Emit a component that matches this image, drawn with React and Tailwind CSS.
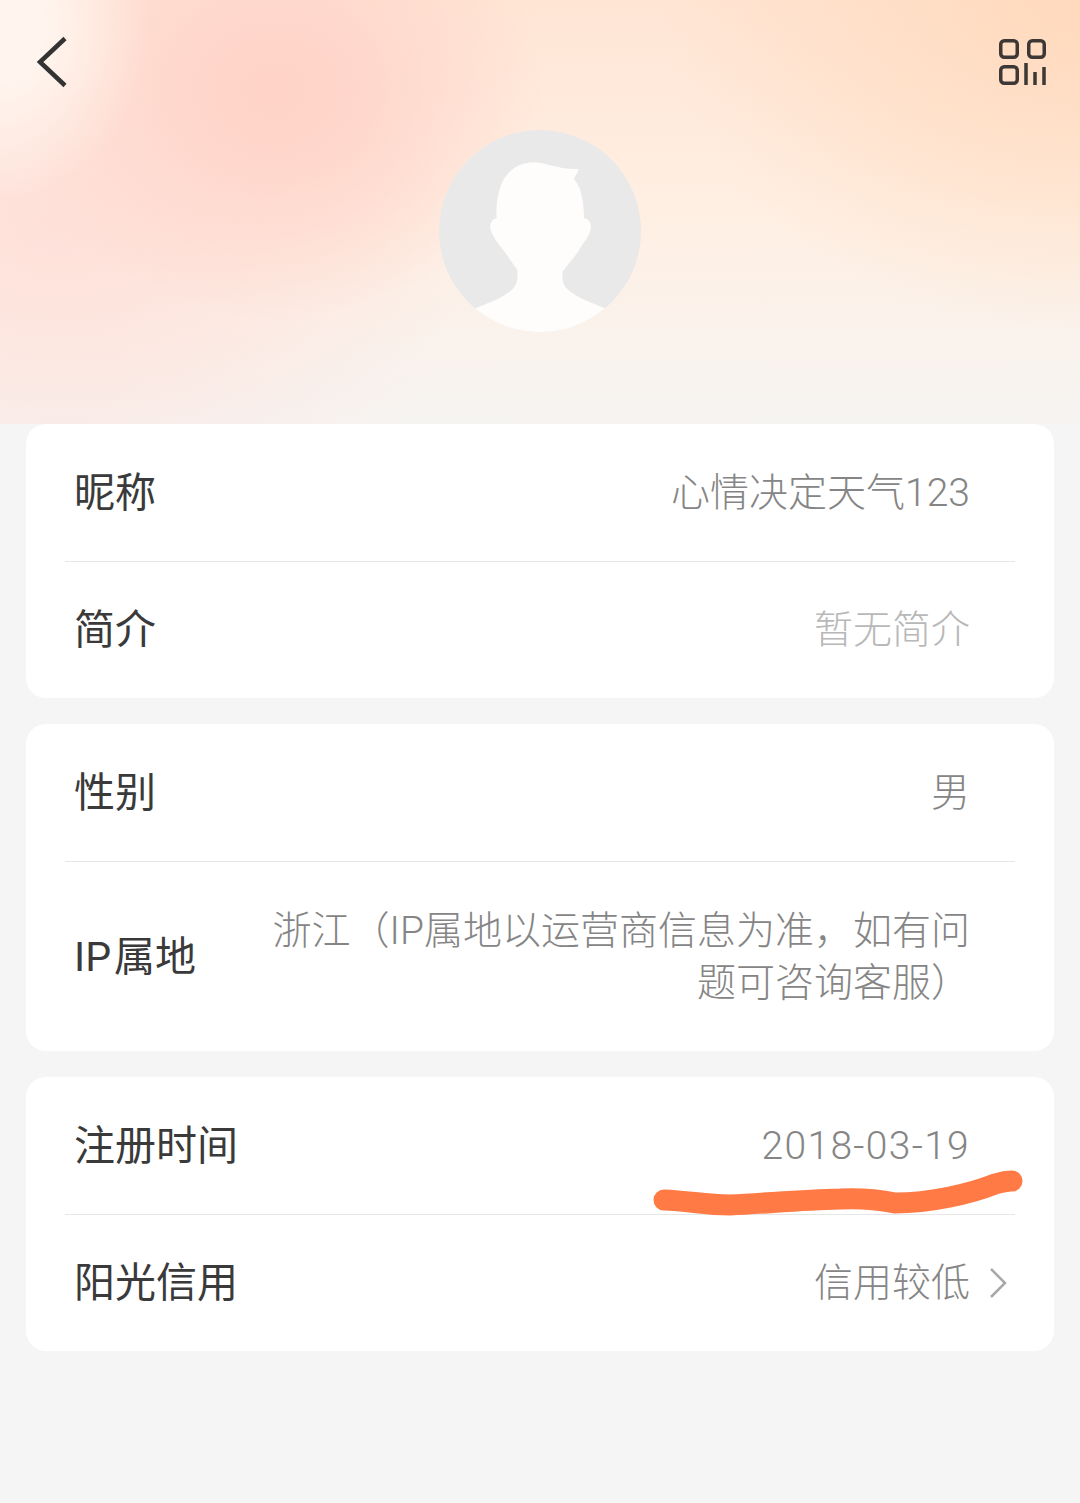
import React from 'react';

const FONT = "font-['Roboto','Noto_Sans_CJK_SC',sans-serif]";

function Row({ label, children, first, tall, chevron, muted }) {
  return (
    <div className={`flex items-center justify-between pl-[9px] ${chevron ? 'pr-[7px]' : 'pr-[45px]'} ${tall ? 'h-[189px]' : first ? 'h-[137px]' : 'h-[136px]'}`}>
      <div className="text-[41px] leading-[52px] text-[#3a3a3a] whitespace-nowrap">{label}</div>
      <div className={`flex items-center text-[39px] leading-[52px] font-light text-right whitespace-nowrap ${muted ? 'text-[#b8b8b8]' : 'text-[#858585]'}`}>
        {children}
        {chevron && (
          <svg width="20" height="32" viewBox="0 0 20 32" fill="none" className="ml-[18px]">
            <path d="M3 2 L17 16 L3 30" stroke="#a8a8a8" strokeWidth="2.5" />
          </svg>
        )}
      </div>
    </div>
  );
}

function Card({ children }) {
  return <div className="bg-white rounded-[20px] px-[39px]">{children}</div>;
}

function Divider() {
  return <div className="h-px bg-[#e6e6e6]" />;
}

export default function App() {
  return (
    <div className={`relative w-[1080px] h-[1503px] overflow-hidden bg-[#f5f5f5] ${FONT}`}>
      <div className="h-[424px] flex flex-col bg-[radial-gradient(ellipse_150px_170px_at_0px_30px,#fff5ee_0%,#fff5ee_30%,rgba(255,245,238,0)_100%),radial-gradient(ellipse_270px_230px_at_275px_90px,#ffd3c7_0%,#ffd6cb_30%,rgba(255,214,203,0)_100%),radial-gradient(ellipse_420px_330px_at_1080px_0px,#ffd9bc_0%,rgba(255,217,188,0)_100%),radial-gradient(ellipse_420px_330px_at_60px_220px,#fee0d9_0%,rgba(254,224,217,0)_100%),linear-gradient(180deg,#ffe5d4_0%,#ffefe3_50%,#f6f4f2_100%)]">
        <div className="flex justify-between items-start pl-[36px] pr-[32px] pt-[36px]">
          <svg width="34" height="52" viewBox="0 0 34 52" fill="none">
            <path d="M29 2.5 L4 26 L29 49.5" stroke="#333333" strokeWidth="4.5" />
          </svg>
          <svg width="50" height="50" viewBox="0 0 50 50" fill="none" stroke="#3d3835" strokeWidth="3.5">
            <rect x="2.75" y="4.75" width="16.5" height="16.5" rx="3.5" />
            <rect x="30.75" y="4.75" width="15.5" height="16.5" rx="3.5" />
            <rect x="2.75" y="30.75" width="16.5" height="16.5" rx="3.5" />
            <path d="M28 27 V49 M37 36 V49 M46 31 V49" />
          </svg>
        </div>
        <div className="flex justify-center mt-[42px]">
          <svg width="202" height="202" viewBox="27 30 606 606">
            <circle cx="330" cy="333" r="303" fill="#e9e9e9" />
            <path
              fill="#fffdfb"
              d="M135 565 C170 550 215 537 245 510 C262 495 264 475 262 450 C245 425 225 395 205 372 C190 350 178 330 181 315 C184 302 192 296 200 295 C198 265 200 230 215 190 C235 145 275 128 310 127 C350 127 385 150 446 147 C442 160 436 168 431 176 C450 195 462 235 462 295 C472 296 481 304 483 318 C484 335 468 360 453 380 C440 405 415 430 398 455 C396 480 398 495 415 510 C445 535 490 550 525 565 A303 303 0 0 1 135 565 Z"
            />
          </svg>
        </div>
      </div>

      <div className="flex flex-col gap-[26px] px-[26px]">
        <Card>
          <Row label="昵称" first>心情决定天气123</Row>
          <Divider />
          <Row label="简介" muted>暂无简介</Row>
        </Card>
        <Card>
          <Row label="性别" first>男</Row>
          <Divider />
          <Row label={<>IP<span className="ml-[3px]">属地</span></>} tall>
            <div>
              浙江（IP属地以运营商信息为准，如有问
              <br />
              题可咨询客服）
            </div>
          </Row>
        </Card>
        <Card>
          <Row label="注册时间" first><span className="tracking-[1.3px]">2018-03-19</span></Row>
          <Divider />
          <Row label="阳光信用" chevron>信用较低</Row>
        </Card>
      </div>

      {/* hand drawn underline on top of the screenshot */}
      <svg className="absolute left-0 top-0 pointer-events-none" width="1080" height="1503" viewBox="0 0 1080 1503" fill="none">
        <path
          d="M664 1200 C690 1201 705 1205 730 1205 C770 1203 800 1200 840 1199 C860 1198 880 1200 895 1203 C930 1203 970 1194 995 1184 C1002 1182 1006 1181 1012 1181"
          stroke="#ff7a45"
          strokeWidth="21"
          strokeLinecap="round"
        />
      </svg>
    </div>
  );
}
